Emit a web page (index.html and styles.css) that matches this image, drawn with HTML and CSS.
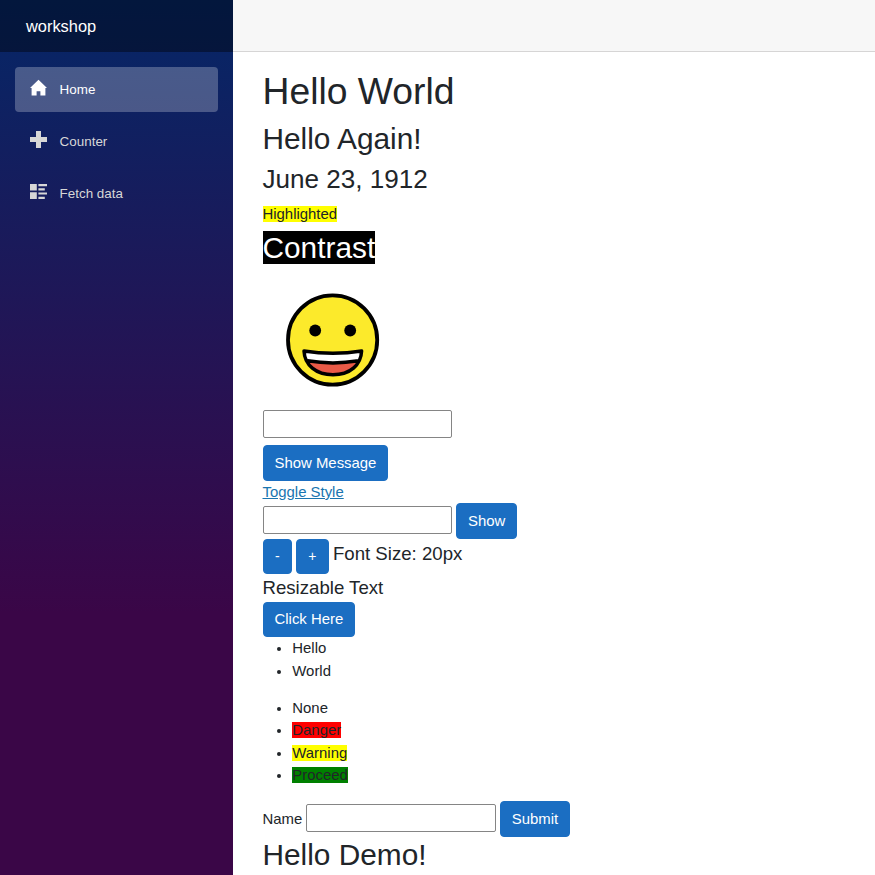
FILE: index.html
```html
<!DOCTYPE html>
<html lang="en">
<head>
<meta charset="utf-8">
<title>workshop</title>
<link rel="stylesheet" href="styles.css">
</head>
<body>
<div class="page">
  <aside class="sidebar">
    <div class="brand">workshop</div>
    <nav class="nav">
      <a class="nav-item active"><svg class="icon" viewBox="0 0 17 17"><path d="M8.5.8 0 9.1h1.6v7.4h5v-4.3h3.8v4.3h5V9.1H17z"/></svg>Home</a>
      <a class="nav-item"><svg class="icon" viewBox="0 0 17 17"><path d="M6 0h5v6h6v5h-6v6H6v-6H0V6h6z"/></svg>Counter</a>
      <a class="nav-item"><svg class="icon" viewBox="0 0 17 17"><path d="M0 1h6.8v6.4H0zM0 9.2h6.8v6.8H0zM8.4 1H17v2.2H8.4zM8.4 5.2h6.4v2.2H8.4zM8.4 9.4H17v2.2H8.4zM8.4 13.8h6.4V16H8.4z"/></svg>Fetch data</a>
    </nav>
  </aside>
  <main class="main">
    <div class="topbar"></div>
    <div class="content">
      <h1>Hello World</h1>
      <h2>Hello Again!</h2>
      <h3>June 23, 1912</h3>
      <div><span class="yellow">Highlighted</span></div>
      <div class="contrast-row"><span class="contrast">Contrast</span></div>
      <svg class="smiley" viewBox="0 0 140 140">
        <circle cx="69.6" cy="70" r="44.6" fill="#fcea2b" stroke="#000" stroke-width="3.8"/>
        <circle cx="52.2" cy="60.5" r="5.9"/>
        <circle cx="87.2" cy="60.5" r="5.9"/>
        <path d="M41 81Q70 85.5 98.6 81C98 95 87 104.7 70 104.7S41.6 95 41 81z" fill="#fff"/>
        <path d="M44.5 91Q70 95.5 95.5 91C90 101 82 104.7 70 104.7S50 101 44.5 91z" fill="#ea5a47"/>
        <path d="M44.5 90.8Q70 95 95.5 90.8M41 81Q70 85.5 98.6 81C98 95 87 104.7 70 104.7S41.6 95 41 81z" fill="none" stroke="#000" stroke-width="3.5" stroke-linejoin="round"/>
      </svg>
      <div class="row input-row"><input class="field" type="text"></div>
      <div class="row"><button class="btn">Show Message</button></div>
      <div><a class="link">Toggle Style</a></div>
      <div class="row"><input class="field" type="text"><button class="btn">Show</button></div>
      <div class="row"><button class="btn small">-</button><button class="btn small">+</button><span class="resizable size-label">Font Size: 20px</span></div>
      <div class="resizable">Resizable Text</div>
      <div class="row"><button class="btn">Click Here</button></div>
      <ul><li>Hello</li><li>World</li></ul>
      <ul>
        <li>None</li>
        <li><span class="red">Danger</span></li>
        <li><span class="yellow">Warning</span></li>
        <li><span class="green">Proceed</span></li>
      </ul>
      <div class="row"><label for="name">Name</label><input class="field" id="name" type="text"><button class="btn">Submit</button></div>
      <h2>Hello Demo!</h2>
    </div>
  </main>
</div>
</body>
</html>
```
FILE: styles.css
```css
* { box-sizing: border-box; }
html { font-size: 14.91px; }
body {
  margin: 0;
  overflow: hidden;
  font: 1rem/1.5 "Liberation Sans", Arial, sans-serif;
  color: #212529;
  background: #fff;
}
.page { display: flex; height: 100vh; }
.sidebar {
  flex: 0 0 233px;
  background: linear-gradient(180deg, #052767 0%, #3a0647 70%);
}
.brand {
  display: flex;
  align-items: center;
  height: 3.5rem;
  padding-left: 26px;
  font-size: 1.1rem;
  color: #fff;
  background: rgba(0, 0, 0, .4);
}
.nav { display: grid; gap: .5rem; padding: 1rem; }
.nav-item {
  display: flex;
  align-items: center;
  height: 3rem;
  padding-left: 1rem;
  border-radius: 4px;
  font-size: .9rem;
  color: #d7d7d7;
}
.nav-item.active { padding-top: 1px; color: #fff; background: rgba(255, 255, 255, .25); }
.icon { width: 17px; height: 17px; margin: 0 12.8px 5px 0; fill: currentColor; }
.main { flex: 1; min-width: 0; }
.topbar { height: 3.5rem; background: #f7f7f7; border-bottom: 1px solid #d6d5d5; }
.content { padding: 1.1rem 29.5px 0; }
h1, h2, h3 { margin: 0 0 .5rem; font-weight: 400; line-height: 1.2; }
h1 { font-size: 2.5rem; }
h2 { font-size: 2rem; }
h3 { font-size: 1.75rem; }
.yellow { background: #ff0; }
.red { background: #f00; }
.green { background: #008000; }
.contrast-row { height: 3rem; padding-top: 1px; font-size: 2rem; }
.contrast { color: #fff; background: #000; }
.smiley { display: block; width: 140px; height: 140px; }
.row { display: flex; align-items: center; gap: 4px; height: 35.4px; }
.input-row { height: 35.6px; align-items: flex-start; }
.field {
  width: 189.5px;
  height: 28px;
  padding: 1px 2px;
  font: inherit;
  background: #fff;
  border: 1px solid #858585;
  border-radius: 2px;
}
.row:not(.input-row) .field { margin-bottom: 2px; }
.btn {
  height: 35.4px;
  padding: 0 11px;
  font: inherit;
  color: #fff;
  background: #1b6ec2;
  border: 1px solid #1b6ec2;
  border-radius: 4px;
}
.btn.small { padding: 1px 11.4px 0; font-size: 14px; }
.link { color: #1975b0; text-decoration: underline; }
.resizable { font-size: 18.64px; line-height: 28px; }
.size-label { margin-bottom: 5px; }
ul { margin: 0 0 1rem; padding-left: 2rem; }
li { height: 1.5rem; }
```
